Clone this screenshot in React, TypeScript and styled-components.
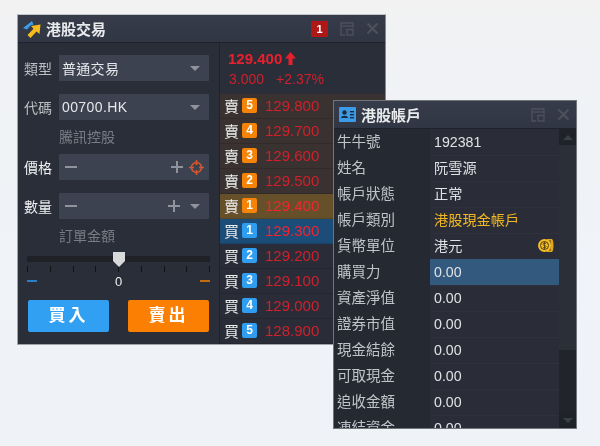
import React from "react";
import styled, { createGlobalStyle } from "styled-components";

const GlobalStyle = createGlobalStyle`
    html, body {
        margin: 0;
        padding: 0;
        background: #f0f3f7;
    }
    * {
        box-sizing: border-box;
    }
`;

const Desktop = styled.div`
    position: relative;
    width: 600px;
    height: 446px;
    overflow: hidden;
    background: linear-gradient(#f2f2f2 0, #f0f2f5 60px, #eff3f8 100%);
    font-family: "Liberation Sans", "Noto Sans CJK TC", sans-serif;
    color: #d6d8dc;
    filter: blur(0.3px);
`;

const TradeWindow = styled.div`
    position: absolute;
    left: 17px;
    top: 14px;
    width: 369px;
    height: 331px;
    display: flex;
    flex-direction: column;
    background: #2a2e38;
    border: 1px solid #8d9197;
    border-color: #c4c5c8 #84878c #a0a3a8 #a0a3a8;
`;

const AccountWindow = styled.div`
    position: absolute;
    left: 333px;
    top: 100px;
    width: 244px;
    height: 329px;
    display: flex;
    flex-direction: column;
    overflow: hidden;
    background: #2a2d37;
    border: 1px solid #71757c;
`;

const TitleBar = styled.div`
    flex: none;
    height: 28px;
    display: flex;
    align-items: center;
    padding: 0 6px 0 5px;
    background: linear-gradient(#363c4a, #303643);
    border-bottom: 1px solid #1f222a;
`;

const Title = styled.div`
    margin-left: 5px;
    flex: 1;
    font-size: 15px;
    font-weight: 700;
    color: #e8eaec;
`;

const WindowButtons = styled.div`
    display: flex;
    align-items: center;
    gap: 12px;
`;

const Badge = styled.div`
    width: 17px;
    height: 16px;
    background: #b01818;
    border-radius: 1px;
    color: #fff;
    font-size: 11px;
    font-weight: 700;
    line-height: 16px;
    text-align: center;
`;

const Body = styled.div`
    flex: 1;
    display: flex;
    min-height: 0;
`;

const FormPane = styled.div`
    width: 202px;
    flex: none;
    padding: 12px 10px 0 6px;
    border-right: 1px solid #1f222a;
`;

const FieldRow = styled.div<{ $mb: number }>`
    display: flex;
    align-items: center;
    gap: 5px;
    height: 26px;
    margin-bottom: ${(p) => p.$mb}px;
`;

const FieldLabel = styled.div<{ $bright?: boolean }>`
    width: 30px;
    flex: none;
    font-size: 14px;
    white-space: nowrap;
    color: ${(p) => (p.$bright ? "#f0f1f3" : "#bcbfc4")};
`;

const Control = styled.div`
    flex: 1;
    height: 100%;
    display: flex;
    align-items: center;
    padding: 0 5px 0 3px;
    background: #3c4250;
    border-radius: 1px;
    font-size: 14px;
    color: #e6e8ea;
`;

const ControlText = styled.div<{ $spacing: number }>`
    flex: 1;
    letter-spacing: ${(p) => p.$spacing}px;
`;

const Caret = styled.div<{ $gap?: number }>`
    width: 0;
    height: 0;
    margin: 0 4px 0 ${(p) => p.$gap ?? 0}px;
    border-left: 5px solid transparent;
    border-right: 5px solid transparent;
    border-top: 5px solid #8e939c;
`;

const Hint = styled.div`
    height: 34px;
    padding: 8px 0 0 35px;
    font-size: 14px;
    line-height: 19px;
    color: #777c85;
`;

const Minus = styled.div`
    width: 12px;
    height: 2px;
    margin-left: 3px;
    background: #8e939c;
`;

const Plus = styled.div`
    width: 12px;
    height: 12px;
    margin-left: auto;
    background:
        linear-gradient(#8e939c, #8e939c) center / 12px 2px no-repeat,
        linear-gradient(#8e939c, #8e939c) center / 2px 12px no-repeat;
`;

const Slider = styled.div`
    margin: 3px -1px 0 3px;
`;

const Track = styled.div`
    position: relative;
    height: 6px;
    background: #1f2127;
`;

const Thumb = styled.svg`
    position: absolute;
    left: 85px;
    top: -4px;
`;

const Ticks = styled.div`
    display: flex;
    justify-content: space-between;
    margin-top: 4px;
`;

const Tick = styled.div`
    width: 1px;
    height: 6px;
    background: #101216;
`;

const SliderLabels = styled.div`
    display: flex;
    align-items: center;
    justify-content: space-between;
    height: 14px;
    margin-top: 2px;
    font-size: 13px;
    color: #eceef0;
`;

const SliderDash = styled.div<{ $color: string }>`
    width: 10px;
    height: 2px;
    background: ${(p) => p.$color};
`;

const Buttons = styled.div`
    display: flex;
    justify-content: space-between;
    margin: 12px 0 0 4px;
`;

const ActionButton = styled.div<{ $color: string }>`
    width: 81px;
    height: 32px;
    background: ${(p) => p.$color};
    border-radius: 2px;
    color: #fff;
    font-size: 17px;
    font-weight: 700;
    letter-spacing: 3px;
    line-height: 32px;
    text-align: center;
`;

const BookPane = styled.div`
    flex: 1;
    display: flex;
    flex-direction: column;
`;

const Quote = styled.div`
    height: 51px;
    padding: 5px 0 0 8px;
    color: #e8202e;
`;

const QuoteMain = styled.div`
    display: flex;
    align-items: center;
    gap: 3px;
    height: 20px;
    font-size: 15px;
    font-weight: 700;
`;

const QuoteSub = styled.div`
    display: flex;
    gap: 12px;
    height: 22px;
    padding-left: 1px;
    line-height: 22px;
    font-size: 14px;
    color: #d0202d;
`;

const BookRow = styled.div<{ $tone: "sell" | "buy" | "bestSell" | "bestBuy" }>`
    height: 25.1px;
    display: flex;
    align-items: center;
    padding-left: 4px;
    border-bottom: 1px solid rgba(0, 0, 0, 0.12);
    background: ${(p) =>
        ({ sell: "#3a3230", buy: "#2a2d37", bestSell: "#665029", bestBuy: "#1c4c78" })[p.$tone]};
`;

const Side = styled.div`
    width: 15px;
    font-size: 15px;
    color: #eceded;
`;

const Level = styled.div<{ $buy: boolean }>`
    width: 15px;
    height: 15px;
    margin-left: 3px;
    background: ${(p) => (p.$buy ? "#2f9df0" : "#f58307")};
    border-radius: 2px;
    color: #fff;
    font-size: 12px;
    font-weight: 700;
    line-height: 15px;
    text-align: center;
`;

const Price = styled.div<{ $strong: boolean }>`
    margin-left: 8px;
    font-size: 15px;
    color: ${(p) => (p.$strong ? "#f4242f" : "#cf202d")};
`;

const AccountBody = styled.div`
    flex: 1;
    display: flex;
    min-height: 0;
`;

const AccountList = styled.div`
    flex: 1;
    min-width: 0;
`;

const AccountRow = styled.div`
    display: grid;
    grid-template-columns: 96px 1fr;
    height: 26px;
`;

const AccountLabel = styled.div`
    padding-left: 3px;
    background: #252932;
    font-size: 14.5px;
    line-height: 26px;
    white-space: nowrap;
    color: #c0c3c7;
`;

const AccountValue = styled.div<{ $active?: boolean; $gold?: boolean }>`
    position: relative;
    padding-left: 4px;
    background: ${(p) => (p.$active ? "#34597f" : "transparent")};
    border-bottom: 1px solid #2f323c;
    font-size: 14.2px;
    line-height: 26px;
    color: ${(p) => (p.$gold ? "#f2b824" : "#dfe1e4")};
`;

const CoinSlot = styled.span`
    position: absolute;
    right: 5px;
    top: 5px;
    display: flex;
`;

const Scrollbar = styled.div`
    flex: none;
    width: 17px;
    display: flex;
    flex-direction: column;
    background: #21242b;
`;

const ScrollEnd = styled.div`
    height: 16px;
    display: flex;
    justify-content: center;
    align-items: center;
    background: #1f2228;
`;

const ScrollThumb = styled.div`
    height: 205px;
    background: #2b2f38;
`;

const ScrollTrack = styled.div`
    flex: 1;
`;

const ScrollArrow = styled.div<{ $down?: boolean }>`
    width: 0;
    height: 0;
    border-left: 5px solid transparent;
    border-right: 5px solid transparent;
    ${(p) => (p.$down ? "border-top" : "border-bottom")}: 5px solid #3a3e48;
`;

const LogoIcon = () => (
    <svg width="18" height="18" viewBox="0 0 18 18">
        <path d="M0 8 L9 1 L10.5 4.5 L7.5 5.5 L4 9.5 Z" fill="#3a9de8" />
        <path d="M8 6 L17.5 4.5 L16.5 14 L13.5 11.5 L7.5 18 L4.5 15 L10.5 8.8 Z" fill="#f7bb1b" />
    </svg>
);

const CardIcon = () => (
    <svg width="17" height="15" viewBox="0 0 17 15">
        <rect x="0" y="0" width="17" height="15" rx="1" fill="#3c9be8" />
        <circle cx="5.5" cy="5.5" r="2.2" fill="#1d2a3c" />
        <path d="M2 11 C2 8 9 8 9 11 Z" fill="#1d2a3c" />
        <rect x="11" y="4" width="4" height="1.4" fill="#1d2a3c" />
        <rect x="11" y="7" width="4" height="1.4" fill="#1d2a3c" />
        <rect x="11" y="10" width="4" height="1.4" fill="#1d2a3c" />
    </svg>
);

const PopOutIcon = () => (
    <svg width="14" height="14" viewBox="0 0 14 14" fill="none" stroke="#4c515c" strokeWidth="1.4">
        <path d="M5 13 H1 V1 H13 V6" />
        <path d="M1 4 H13" />
        <rect x="7" y="7.5" width="6" height="5.5" />
    </svg>
);

const CloseIcon = () => (
    <svg width="13" height="13" viewBox="0 0 13 13" stroke="#4c515c" strokeWidth="2.2">
        <path d="M1.5 1.5 L11.5 11.5 M11.5 1.5 L1.5 11.5" />
    </svg>
);

const TargetSvg = styled.svg`
    margin-left: 6px;
`;

const TargetIcon = () => (
    <TargetSvg width="15" height="15" viewBox="0 0 15 15" fill="none" stroke="#d9552c">
        <circle cx="7.5" cy="7.5" r="5" strokeWidth="1.6" />
        <path d="M7.5 0 V5 M7.5 10 V15 M0 7.5 H5 M10 7.5 H15" strokeWidth="1.6" />
    </TargetSvg>
);

const UpIcon = () => (
    <svg width="11" height="13" viewBox="0 0 11 13" fill="#e8202e">
        <path d="M5.5 0 L11 6.5 H7.5 V13 H3.5 V6.5 H0 Z" />
    </svg>
);

const CoinIcon = () => (
    <svg width="16" height="15" viewBox="0 0 16 15">
        <path d="M9 1 H14 C16 3 16 12 14 14 H9 Z" fill="#e0a61c" />
        <path d="M12 2 V13" stroke="#3a2d10" strokeWidth="0.8" />
        <circle cx="6.5" cy="7.5" r="6.5" fill="#f6bd26" />
        <circle cx="6.5" cy="7.5" r="4" fill="none" stroke="#4a3a12" strokeWidth="1" />
        <path d="M8 5.8 C7 4.8 5 5.2 5 6.4 C5 8 8 7 8 8.6 C8 9.8 6 10.2 5 9.2 M6.5 4 V11" fill="none" stroke="#4a3a12" strokeWidth="0.8" />
    </svg>
);

const book = [
    { side: "賣", level: 5, price: "129.800", tone: "sell" },
    { side: "賣", level: 4, price: "129.700", tone: "sell" },
    { side: "賣", level: 3, price: "129.600", tone: "sell" },
    { side: "賣", level: 2, price: "129.500", tone: "sell" },
    { side: "賣", level: 1, price: "129.400", tone: "bestSell" },
    { side: "買", level: 1, price: "129.300", tone: "bestBuy" },
    { side: "買", level: 2, price: "129.200", tone: "buy" },
    { side: "買", level: 3, price: "129.100", tone: "buy" },
    { side: "買", level: 4, price: "129.000", tone: "buy" },
    { side: "買", level: 5, price: "128.900", tone: "buy" },
] as const;

const account = [
    { label: "牛牛號", value: "192381" },
    { label: "姓名", value: "阮雪源" },
    { label: "帳戶狀態", value: "正常" },
    { label: "帳戶類別", value: "港股現金帳戶", gold: true },
    { label: "貨幣單位", value: "港元", coin: true },
    { label: "購買力", value: "0.00", active: true },
    { label: "資產淨值", value: "0.00" },
    { label: "證券市值", value: "0.00" },
    { label: "現金結餘", value: "0.00" },
    { label: "可取現金", value: "0.00" },
    { label: "追收金額", value: "0.00" },
    { label: "凍結資金", value: "0.00" },
];

const App: React.FC = () => {
    return (
        <Desktop>
            <GlobalStyle />
            <TradeWindow>
                <TitleBar>
                    <LogoIcon />
                    <Title>港股交易</Title>
                    <WindowButtons>
                        <Badge>1</Badge>
                        <PopOutIcon />
                        <CloseIcon />
                    </WindowButtons>
                </TitleBar>
                <Body>
                    <FormPane>
                        <FieldRow $mb={13}>
                            <FieldLabel>類型</FieldLabel>
                            <Control>
                                <ControlText $spacing={0.3}>普通交易</ControlText>
                                <Caret />
                            </Control>
                        </FieldRow>
                        <FieldRow $mb={0}>
                            <FieldLabel>代碼</FieldLabel>
                            <Control>
                                <ControlText $spacing={0.4}>00700.HK</ControlText>
                                <Caret />
                            </Control>
                        </FieldRow>
                        <Hint>騰訊控股</Hint>
                        <FieldRow $mb={13}>
                            <FieldLabel $bright>價格</FieldLabel>
                            <Control>
                                <Minus />
                                <Plus />
                                <TargetIcon />
                            </Control>
                        </FieldRow>
                        <FieldRow $mb={0}>
                            <FieldLabel $bright>數量</FieldLabel>
                            <Control>
                                <Minus />
                                <Plus />
                                <Caret $gap={10} />
                            </Control>
                        </FieldRow>
                        <Hint>訂單金額</Hint>
                        <Slider>
                            <Track>
                                <Thumb width="14" height="16" viewBox="0 0 14 16">
                                    <path d="M1 0 H13 V9 L7 15 L1 9 Z" fill="#d8d9da" />
                                </Thumb>
                            </Track>
                            <Ticks>
                                {Array.from({ length: 9 }, (_, i) => (
                                    <Tick key={i} />
                                ))}
                            </Ticks>
                            <SliderLabels>
                                <SliderDash $color="#2b7fc4" />
                                0
                                <SliderDash $color="#c46a10" />
                            </SliderLabels>
                        </Slider>
                        <Buttons>
                            <ActionButton $color="#31a0f2">買入</ActionButton>
                            <ActionButton $color="#fb7f02">賣出</ActionButton>
                        </Buttons>
                    </FormPane>
                    <BookPane>
                        <Quote>
                            <QuoteMain>
                                129.400
                                <UpIcon />
                            </QuoteMain>
                            <QuoteSub>
                                <span>3.000</span>
                                <span>+2.37%</span>
                            </QuoteSub>
                        </Quote>
                        {book.map((row) => (
                            <BookRow key={row.side + row.level} $tone={row.tone}>
                                <Side>{row.side}</Side>
                                <Level $buy={row.side === "買"}>{row.level}</Level>
                                <Price $strong={row.tone === "bestSell" || row.tone === "bestBuy"}>{row.price}</Price>
                            </BookRow>
                        ))}
                    </BookPane>
                </Body>
            </TradeWindow>
            <AccountWindow>
                <TitleBar>
                    <CardIcon />
                    <Title>港股帳戶</Title>
                    <WindowButtons>
                        <PopOutIcon />
                        <CloseIcon />
                    </WindowButtons>
                </TitleBar>
                <AccountBody>
                    <AccountList>
                        {account.map((row) => (
                            <AccountRow key={row.label}>
                                <AccountLabel>{row.label}</AccountLabel>
                                <AccountValue $active={row.active} $gold={row.gold}>
                                    {row.value}
                                    {row.coin && (
                                        <CoinSlot>
                                            <CoinIcon />
                                        </CoinSlot>
                                    )}
                                </AccountValue>
                            </AccountRow>
                        ))}
                    </AccountList>
                    <Scrollbar>
                        <ScrollEnd>
                            <ScrollArrow />
                        </ScrollEnd>
                        <ScrollThumb />
                        <ScrollTrack />
                        <ScrollEnd>
                            <ScrollArrow $down />
                        </ScrollEnd>
                    </Scrollbar>
                </AccountBody>
            </AccountWindow>
        </Desktop>
    );
};

export default App;
